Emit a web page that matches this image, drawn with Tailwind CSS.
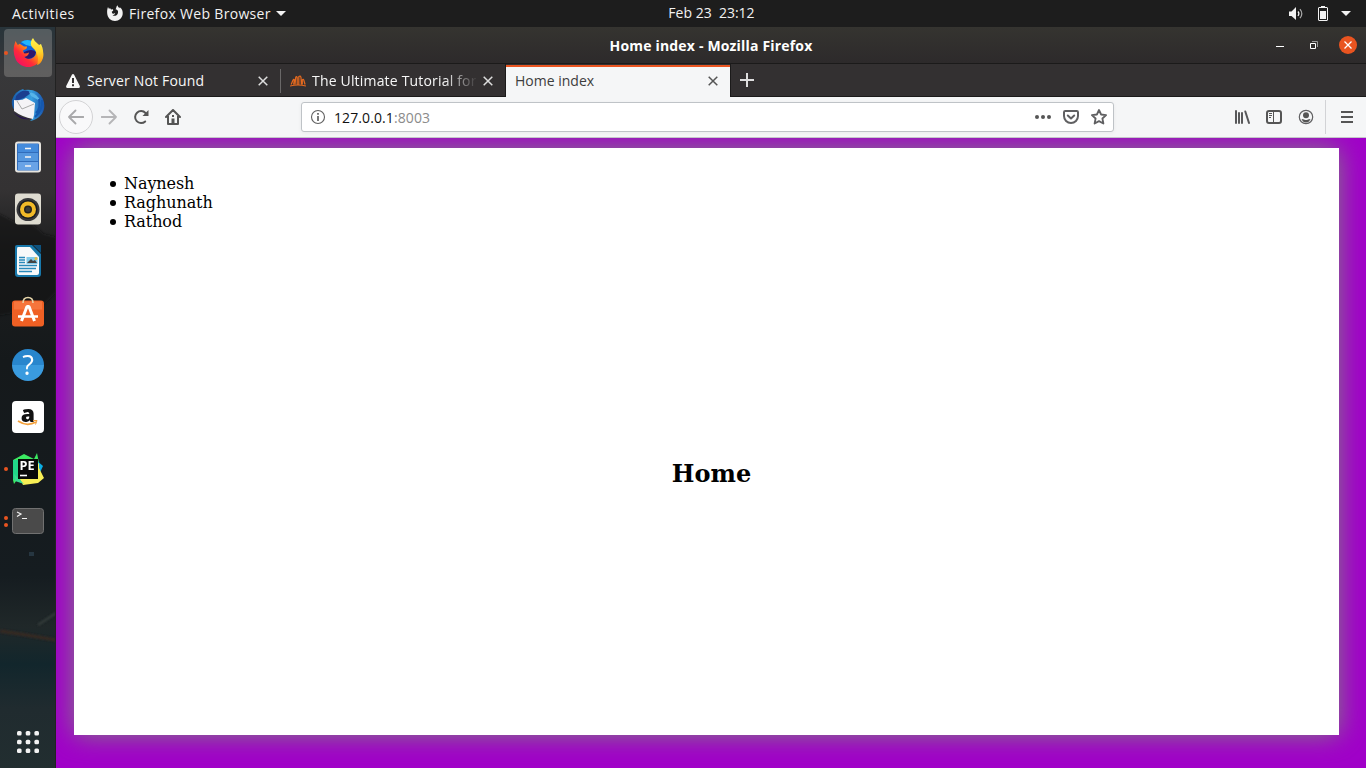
<!DOCTYPE html>
<html lang="en">
<head>
<meta charset="utf-8">
<title>Home index</title>
<script src="https://cdn.jsdelivr.net/npm/@tailwindcss/browser@4"></script>
</head>
<body class="w-[1366px] h-[768px] overflow-hidden flex flex-col bg-[#1d1d1d] font-['Open_Sans','Noto_Sans',sans-serif] text-[14px] leading-5">
<header class="h-[27px] shrink-0 grid grid-cols-3 items-center bg-[#1d1d1d] text-[#f2f2f2]">
  <div class="flex items-center pl-3">
    <span class="w-[95px] tracking-[0.5px]">Activities</span>
    <svg class="w-4 h-4 shrink-0 -mt-px" viewBox="0 0 16 16"><path fill="#f2f2f2" d="M1 2l1 2 1-1 1 1.500 2-.2.2 1.500-1.500 1 .5 1.500c.7.800 2.300.2 2.900-.3.300.8-1.200 2.200-2.600 2.200 3.500 1.700 6-1 5.500-4C10.700 5 9.800 4.500 8.500 4.200 9.500 3.500 9 1.500 10.500.3c.3 1.800 1.200 1.700 1.800 3l.5-1C15 4 16 6 15.700 9c-.5 4-3.700 7-7.700 7S.5 13 .2 8.500C0 6 .2 4 1 2z"/></svg>
    <span class="ml-[6px] whitespace-nowrap tracking-[0.32px]">Firefox Web Browser</span>
    <svg class="w-[10px] h-[5px] ml-[5px]" viewBox="0 0 10 5"><path fill="#f2f2f2" d="M0 0h10L5 5z"/></svg>
  </div>
  <div class="text-center whitespace-pre pl-[57px] pb-px">Feb 23  23:12</div>
  <div class="flex justify-end items-center pr-[15px]">
    <svg class="w-4 h-4" viewBox="0 0 16 16"><path fill="#f2f2f2" d="M1 5.500h2.500L8 1v13L3.500 10H1z"/><path fill="none" stroke="#f2f2f2" stroke-width="1.200" d="M10 5.500q1.800 2.200 0 4.500"/><path fill="none" stroke="#aaa" stroke-width="1.200" d="M12 3.200q3.600 4.500 0 9"/></svg>
    <svg class="w-[10px] h-[15px] ml-[14px] -mt-px" viewBox="0 0 10 15"><path fill="#f2f2f2" fill-rule="evenodd" d="M3 0h4v1h2l1 1v12l-1 1H1l-1-1V2l1-1h2zM1 2v12h8V2zM2 5h6v8H2z"/></svg>
    <svg class="w-[10px] h-[5px] ml-[13px]" viewBox="0 0 10 5"><path fill="#f2f2f2" d="M0 0h10L5 5z"/></svg>
  </div>
</header>
<div class="flex flex-1 min-h-0">
<nav class="w-14 shrink-0 flex flex-col items-center bg-[#1a2023] relative overflow-hidden">
  <svg class="absolute inset-0 w-14 h-[741px]" viewBox="0 0 56 741">
    <defs>
      <linearGradient id="sky" x2="0" y2="1"><stop stop-color="#28343a"/><stop offset=".06" stop-color="#38383a"/><stop offset=".22" stop-color="#343233"/><stop offset=".3" stop-color="#1d1e1f"/><stop offset=".45" stop-color="#15191b"/><stop offset=".74" stop-color="#151c20"/><stop offset=".81" stop-color="#202829"/><stop offset=".86" stop-color="#12262c"/><stop offset=".92" stop-color="#202b2f"/><stop offset="1" stop-color="#222e30"/></linearGradient>
      <filter id="soft"><feGaussianBlur stdDeviation="1"/></filter>
    </defs>
    <path fill="url(#sky)" d="M0 0h56v741H0z"/>
    <g filter="url(#soft)"><path fill="#151718" opacity=".6" d="M-4 185l19 10 15 0 14 12 16 4v50l-20 20-44 8z"/><path fill="none" stroke="#392921" stroke-width="3" d="M0 604l20 3 36 6"/><path stroke="#39413f" stroke-width="2" d="M38 598l18-12"/></g>
    <path fill="#263641" d="M29 525h5v4h-5z"/><path fill="#222" d="M55 0h1v741h-1z"/>
  </svg>
  <div class="relative w-14 h-[52px] flex items-center justify-center">
    <span class="absolute left-1 top-[2px] w-12 h-12 rounded-[4px] bg-[#d8d5d1]/25"></span><span class="absolute left-1 top-[24px] w-1 h-1 rounded-full bg-[#e95420]"></span>
    <svg class="relative w-8 h-8" viewBox="0 0 32 32"><defs><linearGradient id="fx" x1=".1" y1=".9" x2=".9" y2=".1"><stop stop-color="#f20b68"/><stop offset=".35" stop-color="#ff2c38"/><stop offset=".65" stop-color="#ff980e"/><stop offset="1" stop-color="#fff44f"/></linearGradient><linearGradient id="yel" x2="0" y2="1"><stop stop-color="#fff44f"/><stop offset=".5" stop-color="#ffd52c"/><stop offset="1" stop-color="#ff8a11"/></linearGradient></defs>
    <circle cx="16" cy="14" r="11" fill="#0a63dc"/><path fill="#20b5ff" d="M9 5q7-4 12 0l1 5-8-2z"/><path fill="#2d176e" d="M12 15q8-4 12 0-1 7-9 7-4-2-3-7z"/><path fill="url(#fx)" d="M3.500 4l2.300 4 2-1.300L12 9.500l3 0q0 2-1 2.500l-3 1.500q0 2 1.500 3 3 0 4.500-1-.5 3.800-5 4.500 5 4 10 0 4-4 1-10l6-3q4 8 0 15c-5 10-19 11-25 1Q-.5 14 3.500 4z"/><path fill="url(#yel)" d="M21 1q1 3 5 6 7 5 5 14-2 6-6 7 2-6 0-11-1-4-5-7-3-5 1-9z"/></svg>
  </div>
  <div class="relative w-14 h-[52px] flex items-center justify-center">
    <svg class="w-[34px] h-[34px]" viewBox="0 0 34 34"><defs><linearGradient id="tb"><stop stop-color="#175aa9"/><stop offset=".6" stop-color="#37a0df"/><stop offset="1" stop-color="#1951a9"/></linearGradient></defs><path fill="url(#tb)" d="M1 12Q4 3 12 1l1 1q14-2 19 9c4 10-1 20-13 22l3-3L5 23Q0 20 1 12z"/><path fill="#1b3e8f" d="M5 8q8-9 15-3l-7 5-9 3z"/><path fill="#57b5e9" d="M18 4q9 2 11 9l-9-5z"/><path fill="#f4f3f6" d="M3 12q8 1 12-2l9 5-1 12-1 4q-11-2-19-8z"/><path fill="none" stroke="#aaa" d="M6 13l5 8 12-5"/><path fill="#251052" d="M2 24q7 6 17 7-9 2-17-7z"/><path fill="none" stroke="#1458ae" stroke-width="2" d="M31 12q1 10-7 17M28 11q2 9-3 14"/></svg>
  </div>
  <div class="relative w-14 h-[52px] flex items-center justify-center">
    <svg class="w-8 h-8" viewBox="0 0 32 32"><rect x="3" y=".5" width="26" height="31" rx="3" fill="#e6e4de"/><rect x="5" y="2.500" width="22" height="27" rx="1" fill="#316dbb"/><path fill="#448bdc" d="M6 3h20v8H6z"/><path fill="#5597df" d="M6 12h20v8H6z"/><path fill="#69a3e7" d="M6 21h20v8H6z"/><path stroke="#f5f5f5" stroke-width="1.600" d="M13 7.500h6M13 16h6M13 25h6"/></svg>
  </div>
  <div class="relative w-14 h-[52px] flex items-center justify-center">
    <svg class="w-8 h-8" viewBox="0 0 32 32"><rect x="3" y=".5" width="26" height="31" rx="3" fill="#dedbd0"/><circle cx="16" cy="16.500" r="11.500" fill="#37373a"/><circle cx="16" cy="16.500" r="9.500" fill="#191b20"/><circle cx="16" cy="16.500" r="8" fill="#f1ba28"/><circle cx="16" cy="16.500" r="4" fill="#24221e"/><circle cx="16" cy="16.500" r="2.500" fill="#3a3a3a"/></svg>
  </div>
  <div class="relative w-14 h-[52px] flex items-center justify-center">
    <svg class="w-8 h-8" viewBox="0 0 32 32"><path fill="#1878ab" d="M5 0h15l9 9v20q0 3-3 3H6q-3 0-3-3V2q0-2 2-2z"/><path fill="#0d527e" d="M21 0h8v8z"/><path fill="#f7f9fa" d="M6 2h12l9 10v16q0 2-2 2H7q-2 0-2-2V4q0-2 1-2z"/><path stroke="#2889ba" stroke-width="1.300" d="M7 12.500h6M7 15h6M7 17.500h6M7 20.500h18M7 23.500h17M7 26.500h13"/><path fill="#80c9e9" d="M14.500 12h11v7h-11z"/><path fill="#444" d="M15 18l4-4 2 2 2-1 2 3z"/><circle cx="24" cy="13.500" r="1.500" fill="#e3bd43"/></svg>
  </div>
  <div class="relative w-14 h-[52px] flex items-center justify-center">
    <svg class="w-8 h-8 -mt-[2px]" viewBox="0 0 32 32"><rect y="4.500" width="32" height="26" rx="3" fill="#ef6024"/><path fill="#f6753c" d="M2 5.500h28v8H2z"/><path fill="none" stroke="#e6d5aa" stroke-width="1.500" d="M11 7q0-5.500 5-5.500T21 7"/><path fill="none" stroke="#fff" stroke-width="3" stroke-linejoin="bevel" d="M9.500 25L15 10.500h2L22.500 25"/><path stroke="#fff" stroke-width="2.500" d="M6 20.500h20"/></svg>
  </div>
  <div class="relative w-14 h-[52px] flex items-center justify-center">
    <div class="w-8 h-8 rounded-full bg-linear-to-b from-[#2886cd] from-50% to-[#3a9bdf] to-50% text-white text-[27px] leading-8 text-center">?</div>
  </div>
  <div class="relative w-14 h-[52px] flex items-center justify-center">
    <div class="relative w-8 h-8 rounded-[4px] bg-white text-[#111] text-[23px] leading-[25px] font-extrabold text-center">a<svg class="absolute left-[5px] top-[18px] w-[22px] h-[8px]" viewBox="0 0 22 8"><path fill="none" stroke="#f4a03a" stroke-width="1.700" d="M1 2q9 6 18 1"/><path fill="none" stroke="#f4a03a" d="M16 1.500l4 0-1.500 4"/></svg></div>
  </div>
  <div class="relative w-14 h-[52px] flex items-center justify-center">
    <span class="absolute left-1 top-[24px] w-1 h-1 rounded-full bg-[#e95420]"></span>
    <svg class="w-8 h-8" viewBox="0 0 32 32"><path fill="#3bea62" d="M1 7L12 1l10 5 3-6 2 10-20 14-5 7-1-4z"/><path fill="#21d789" d="M1 7l9 0v23L1 26z"/><path fill="#0baee4" d="M23 6l8 7-5 11-4-5z"/><path fill="#f8ef55" d="M27 10l0 5 5 10-6 5-15 2-4-8z"/><path fill="#39dc91" d="M2 21l10 10-9-3z"/><path fill="#090909" d="M6 6h20v20H6z"/><path stroke="#fff" stroke-width="1.600" d="M8 22.500h7"/><text x="7.500" y="16.500" fill="#fff" font-size="12" font-weight="700" textLength="15" lengthAdjust="spacingAndGlyphs">PE</text></svg>
  </div>
  <div class="relative w-14 h-[52px] flex items-center justify-center">
    <span class="absolute left-1 top-[21px] w-1 h-1 rounded-full bg-[#e95420]"></span><span class="absolute left-1 top-[28px] w-1 h-1 rounded-full bg-[#e95420]"></span>
    <svg class="w-8 h-8" viewBox="0 0 32 32"><rect x=".5" y="3.500" width="31" height="25" rx="3" fill="#4a4a4a" stroke="#717171"/><path fill="none" stroke="#f2f2f2" stroke-width="1.200" d="M5 7l4 2-4 2.500M10 13.500h5"/></svg>
  </div>
  <svg class="relative mt-auto mb-[15px] w-[22px] h-[22px]" viewBox="0 0 22 22" fill="#f2f2f2"><rect width="4.600" height="4.600" rx="1.500"/><rect x="8.700" width="4.600" height="4.600" rx="1.500"/><rect x="17.400" width="4.600" height="4.600" rx="1.500"/><rect y="8.700" width="4.600" height="4.600" rx="1.500"/><rect x="8.700" y="8.700" width="4.600" height="4.600" rx="1.500"/><rect x="17.400" y="8.700" width="4.600" height="4.600" rx="1.500"/><rect y="17.400" width="4.600" height="4.600" rx="1.500"/><rect x="8.700" y="17.400" width="4.600" height="4.600" rx="1.500"/><rect x="17.400" y="17.400" width="4.600" height="4.600" rx="1.500"/></svg>
</nav>
<section class="flex-1 min-w-0 flex flex-col">
  <div class="h-[37px] shrink-0 bg-linear-to-b from-[#353430] to-[#2d2a2b] border-b border-[#1b1a1a] grid grid-cols-[1fr_auto_1fr] items-center text-white">
    <span></span>
    <b class="font-bold whitespace-nowrap tracking-[0.18px] pt-[2px]">Home index - Mozilla Firefox</b>
    <div class="flex items-center justify-end pr-[9px]">
      <svg class="w-2 h-2 mr-[26px] mt-1" viewBox="0 0 8 8"><path fill="#fff" d="M0 3h8v1H0z"/></svg>
      <svg class="w-2 h-2 mr-[21px]" viewBox="0 0 8 8"><path fill="none" stroke="#fff" d="M.5 2.500h5v5h-5z"/><path fill="none" stroke="#999" d="M2 .5h5.500V6"/></svg>
      <svg class="w-[18px] h-[18px]" viewBox="0 0 18 18"><circle cx="9" cy="9" r="9" fill="#e95420"/><path stroke="#fff" stroke-width="1.300" d="M5.500 5.500l7 7m0-7l-7 7"/></svg>
    </div>
  </div>
  <div class="h-[33px] shrink-0 flex bg-[#333031] text-[#f7f7f7] whitespace-nowrap">
    <div class="w-[225px] h-full flex items-center pl-[10px] pr-[13px] pt-px border-b border-[#1b1a1a]">
      <svg class="w-[14px] h-[14px] mr-[7px]" viewBox="0 0 14 14"><path fill="#f7f7f7" fill-rule="evenodd" d="M6 .6Q7-.5 8 .6l5.800 11.500Q14.200 14 12.500 14h-11Q-.2 14 .2 12.100zM6 4v5h2V4zm0 6.300v2h2v-2z"/></svg>
      <span class="flex-1 tracking-[0.18px] pt-px">Server Not Found</span>
      <svg class="w-[10px] h-[10px]" viewBox="0 0 10 10"><path stroke="#dedede" stroke-width="1.500" d="M.7.7l8.600 8.600m0-8.600L.7 9.300"/></svg>
    </div>
    <div class="w-[225px] h-full flex items-center pl-[9px] pr-[12px] pt-px border-b border-r border-[#1b1a1a] relative">
      <span class="absolute left-[-1px] top-[5px] w-px h-6 bg-[#6a6868]"></span>
      <svg class="w-4 h-4 mr-[6px]" viewBox="0 0 16 16" fill="none" stroke="#e66a1f" stroke-width="1.200"><path d="M1.200 11.500l1.600-4q1-1.800 1.600-.8L3.600 11.500M5 11.500l.7-7q.7-1.800 1.500 0v7M8.800 11.500v-8q1.700-1.200 2.200 1l.4 7M12.300 11.500V6.800q1-1.300 1.600.7l1.200 4M0 13q8-2 16 0"/></svg>
      <span class="w-[164px] overflow-hidden mask-r-from-[132px] mask-r-to-[166px] tracking-[0.18px] pt-px">The Ultimate Tutorial for</span>
      <svg class="w-[10px] h-[10px] ml-auto shrink-0" viewBox="0 0 10 10"><path stroke="#dedede" stroke-width="1.500" d="M.7.7l8.600 8.600m0-8.600L.7 9.300"/></svg>
    </div>
    <div class="w-[224px] h-[33px] mt-px flex items-center pl-[9px] pr-[12px] bg-[#f5f6f7] text-[#3d3d3d] border-t-2 border-[#e95420]">
      <span class="flex-1 -mt-[3px]">Home index</span>
      <svg class="w-[10px] h-[10px] -mt-[3px]" viewBox="0 0 10 10"><path stroke="#555" stroke-width="1.500" d="M.7.7l8.600 8.600m0-8.600L.7 9.300"/></svg>
    </div>
    <div class="flex-1 h-full border-l border-b border-[#1b1a1a] pl-[9px] pt-[9px]"><svg class="w-[14px] h-[14px]" viewBox="0 0 14 14"><path fill="#dedede" d="M6 0h2v14H6zM0 6h14v2H0z"/></svg></div>
  </div>
  <div class="h-[41px] shrink-0 flex items-center bg-[#f5f6f7] border-b border-[#c5c5ca] text-[#555]">
    <div class="ml-[3px] w-[34px] h-[34px] rounded-full border border-[#d3d3d5] bg-[#f9f9fa] flex items-center justify-center"><svg class="w-4 h-4" viewBox="0 0 16 16" fill="none" stroke="#a9a9ab" stroke-width="1.800"><path stroke-linecap="round" stroke-linejoin="round" d="M7.500 1.500L1 8l6.500 6.500M1 8h14.500"/></svg></div>
    <svg class="w-4 h-4 ml-2" viewBox="0 0 16 16" fill="none" stroke="#b5b5b7" stroke-width="1.800"><path stroke-linecap="round" stroke-linejoin="round" d="M8.500 1.500L15 8l-6.500 6.500M15 8H.5"/></svg>
    <svg class="w-4 h-4 ml-4" viewBox="0 0 16 16"><path fill="none" stroke="#555" stroke-width="2" stroke-linecap="round" d="M12.200 12.500A6 6 0 1 1 12.500 4"/><path fill="#555" d="M15.500 1v6h-6z"/></svg>
    <svg class="w-4 h-4 ml-4" viewBox="0 0 16 16" fill="none" stroke="#555" stroke-width="2"><path stroke-linecap="round" stroke-linejoin="round" d="M1 8l7-7 7 7M3 7v8h10V7"/><path fill="#555" stroke="none" d="M6.500 14V9.500h3V14zM7 6h2v2H7z"/></svg>
    <div class="ml-[120px] w-[813px] h-[30px] rounded-[3px] border border-[#bfc3c7] bg-white shadow-[0_1px_4px_rgba(0,0,0,0.05)] flex items-center px-2">
      <svg class="w-4 h-4" viewBox="0 0 16 16"><circle cx="8" cy="8" r="6.500" fill="none" stroke="#606060" stroke-width="1.100"/><path fill="#555" d="M7.200 7h1.600v5H7.200zM7.200 4h1.600v1.700H7.200z"/></svg>
      <span class="ml-2 flex-1 text-[#8b8b8b] pt-[2px] tracking-[0.1px]"><span class="text-[#111]">127.0.0.1</span>:8003</span>
      <svg class="w-4 h-4" viewBox="0 0 16 16" fill="#555"><circle cx="2" cy="8" r="2"/><circle cx="8" cy="8" r="2"/><circle cx="14" cy="8" r="2"/></svg>
      <svg class="w-4 h-4 ml-3" viewBox="0 0 16 16" fill="none" stroke="#606062" stroke-width="2" stroke-linecap="round" stroke-linejoin="round"><path d="M2.200 2h11.600q1.200 0 1.200 1.200V7a7 7 0 0 1-14 0V3.200Q1 2 2.200 2zM4.800 6.500L8 9.500l3.200-3"/></svg>
      <svg class="w-4 h-4 ml-3 -mr-[2px]" viewBox="0 0 16 16" fill="none" stroke="#606062" stroke-width="1.800" stroke-linejoin="round"><path d="M8 1l2.100 4.500 5 .6-3.700 3.400 1 5L8 12.100 3.600 14.500l1-5L.9 6.100l5-.6z"/></svg>
    </div>
    <svg class="w-4 h-4 ml-auto" viewBox="0 0 16 16" stroke="#58585a" stroke-width="2" stroke-linecap="round"><path d="M2 2v12M5 4v10M8 4v10M11.300 2.500L15 14"/></svg>
    <svg class="w-4 h-4 ml-4" viewBox="0 0 16 16" fill="none" stroke="#555"><rect x="1" y="2" width="14" height="12" rx="2" stroke-width="2"/><path d="M7.500 2v12M3 4.500h3M3 6.500h3M3 8.500h2"/></svg>
    <svg class="w-4 h-4 ml-4" viewBox="0 0 16 16"><circle cx="8" cy="8" r="6.700" fill="none" stroke="#606062" stroke-width="1.200"/><circle cx="8" cy="6.200" r="3" fill="#555"/><path fill="#555" d="M3.500 10q1.800 0 3 .7 1.500.8 3 0 1.200-.7 3-.7-1.500 3.500-4.500 3.500T3.500 10z"/></svg>
    <span class="w-px h-[34px] bg-[#d2d3d6] ml-[11px]"></span>
    <svg class="w-3 h-3 ml-[15px] mr-[13px]" viewBox="0 0 12 12" fill="#555"><path d="M0 0h12v2H0zM0 5h12v2H0zM0 10h12v2H0z"/></svg>
  </div>
  <main class="flex-1 min-h-0 bg-[#a000c8] pt-[10px] pl-[18px] pr-[27px] pb-[33px] overflow-hidden font-['DejaVu_Serif',serif] text-black">
    <div class="h-full bg-white shadow-[0_0_25px_#808080] pt-[26px] pl-[10px]">
      <ul class="pl-[26px] text-[16px] leading-[19px] tracking-[-0.08px]">
        <li class="flex items-center before:content-[''] before:w-[6px] before:h-[6px] before:mr-2 before:rounded-full before:bg-black">Naynesh</li>
        <li class="flex items-center before:content-[''] before:w-[6px] before:h-[6px] before:mr-2 before:rounded-full before:bg-black">Raghunath</li>
        <li class="flex items-center before:content-[''] before:w-[6px] before:h-[6px] before:mr-2 before:rounded-full before:bg-black">Rathod</li>
      </ul>
      <h2 class="mt-[229px] text-center text-[24px] leading-[28px] font-bold">Home</h2>
    </div>
  </main>
</section>
</div>
</body>
</html>
